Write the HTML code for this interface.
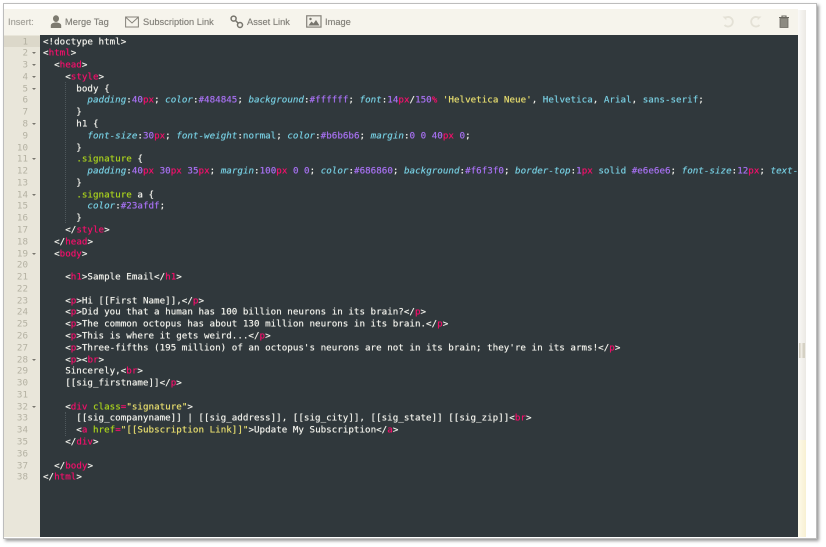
<!DOCTYPE html>
<html><head><meta charset="utf-8">
<style>
html,body{margin:0;padding:0;width:826px;height:547px;overflow:hidden;background:#fff}
#frame{position:absolute;left:3px;top:3px;width:812px;height:534px;border:1px solid #bdbdbd;border-right-width:1.5px;background:#fff;box-shadow:2px 2px 3px #999}
#tb{position:absolute;left:4px;top:9px;width:794px;height:26px;background:#f6f4ec}
.tl{position:absolute;top:16px;font:9.3px/12px "Liberation Sans",sans-serif;color:#85837c;white-space:nowrap;filter:blur(.3px);text-shadow:0 0 .4px currentColor}
svg{position:absolute;filter:blur(.25px)}
#gut{position:absolute;left:4px;top:35px;width:36px;height:502px;background:#e9e6da}
#act{position:absolute;left:4px;top:35.5px;width:36px;height:11.8px;background:#dcd8ca}
#ed{position:absolute;left:40px;top:35px;width:758px;height:502px;background:#30383c;overflow:hidden}
#sb{position:absolute;left:798px;top:10px;width:8px;height:430px;background:linear-gradient(90deg,#faf9f7,#ebe9e4)}
#sby{position:absolute;left:798px;top:440px;width:8px;height:97px;background:linear-gradient(90deg,#fdfaeb,#f8f0d2)}
#th{position:absolute;left:799px;top:343px;width:6px;height:15px;background:linear-gradient(90deg,#d5d1c4 0 1.5px,#efece4 1.5px 3.5px,#d5d1c4 3.5px)}
.n{position:absolute;left:4px;width:24px;text-align:right;font:9.2px/11.78px "DejaVu Sans Mono",monospace;color:#b4b1a2;transform:translateY(.6px);filter:blur(.3px)}
.f{position:absolute;left:31.5px;width:0;height:0;border-left:2px solid transparent;border-right:2px solid transparent;border-top:2.5px solid #77756d}
.l{position:absolute;left:3px;white-space:pre;font:9.2px/11.78px "DejaVu Sans Mono",monospace;letter-spacing:.02px;color:#f0f0ea;transform:translateY(.6px);filter:blur(.2px);text-shadow:0 0 .5px currentColor}
.g{position:absolute;left:25px;width:0;border-left:1px dotted #4f585c}
t{color:#f0106a}
i{color:#76cde0;font-style:italic}
b{font-weight:normal;color:#a570ee}
u{text-decoration:none;color:#f0106a}
s{text-decoration:none;color:#a8d01e}
q{quotes:none;color:#e6dc6e}
e{color:#78cde0}
</style></head><body>
<div id="frame"></div>
<div id="tb"></div>
<div class="tl" style="left:8px;color:#a5a39b">Insert:</div>
<svg style="left:50px;top:15px" width="12" height="14" viewBox="0 0 12 14"><ellipse cx="6" cy="3.6" rx="3" ry="3.4" fill="#7d7a70"/><path d="M0.8 13v-2.4C0.8 8.6 3 7.5 6 7.5s5.200 1.100 5.200 3.100V13z" fill="#7d7a70"/></svg>
<div class="tl" style="left:65px">Merge Tag</div>
<svg style="left:125px;top:16px" width="14" height="12" viewBox="0 0 14 12"><rect x="0.6" y="1" width="12.800" height="10" fill="none" stroke="#85827a" stroke-width="1"/><path d="M1 1.500L7 7l6-5.500" fill="none" stroke="#85827a" stroke-width="1"/></svg>
<div class="tl" style="left:143px">Subscription Link</div>
<svg style="left:230px;top:15px" width="14" height="14" viewBox="0 0 14 14"><circle cx="3.600" cy="3.600" r="2.500" fill="none" stroke="#77756d" stroke-width="1.500"/><circle cx="10" cy="10" r="2.500" fill="none" stroke="#77756d" stroke-width="1.500"/><path d="M5.500 5.500l2.800 2.800" stroke="#77756d" stroke-width="1.500"/></svg>
<div class="tl" style="left:247px">Asset Link</div>
<svg style="left:306px;top:15px" width="16" height="13" viewBox="0 0 16 13"><rect x="0.700" y="0.800" width="14.300" height="11.300" fill="#f2f0e8" stroke="#85827a" stroke-width="1.200"/><path d="M2.500 10.500l3-4 2 2 2.500-3.500 3.500 5.500z" fill="#77756d"/><circle cx="4.500" cy="4" r="1.200" fill="#77756d"/></svg>
<div class="tl" style="left:325px">Image</div>
<svg style="left:721px;top:15px" width="14" height="14" viewBox="0 0 14 14"><path d="M3.800 3.200A4.800 4.800 0 1 1 3.500 10" fill="none" stroke="#e4e1d6" stroke-width="1.800"/><path d="M1.500 1.500h3.800v3.800z" fill="#e4e1d6"/></svg>
<svg style="left:749px;top:15px" width="14" height="14" viewBox="0 0 14 14"><path d="M10.200 3.200A4.800 4.800 0 1 0 10.500 10" fill="none" stroke="#e4e1d6" stroke-width="1.800"/><path d="M12.500 1.500h-3.800v3.800z" fill="#e4e1d6"/></svg>
<svg style="left:778px;top:15px" width="12" height="13" viewBox="0 0 12 13"><path d="M1 2.500h10M4 2.500V1h4v1.500" fill="none" stroke="#69675f" stroke-width="1.100"/><path d="M2 3.500h8v9H2z" fill="#8d8b82" stroke="#69675f" stroke-width="0.800"/></svg>
<div id="gut"></div><div id="act"></div>
<div id="ed">
<div class="g" style="top:47px;height:141px"></div>
<div class="g" style="top:377px;height:24px"></div>
<div class="l" style="top:0.500px">&lt;!doctype html&gt;</div>
<div class="l" style="top:12.280px">&lt;<t>html</t>&gt;</div>
<div class="l" style="top:24.060px">  &lt;<t>head</t>&gt;</div>
<div class="l" style="top:35.840px">    &lt;<t>style</t>&gt;</div>
<div class="l" style="top:47.620px">      body {</div>
<div class="l" style="top:59.400px">        <i>padding</i>:<b>40</b><u>px</u>; <i>color</i>:<b>#484845</b>; <i>background</i>:<b>#ffffff</b>; <i>font</i>:<b>14</b><u>px</u>/<b>150</b><u>%</u> <q>'Helvetica Neue'</q>, <e>Helvetica</e>, <e>Arial</e>, <e>sans-serif</e>;</div>
<div class="l" style="top:71.180px">      }</div>
<div class="l" style="top:82.960px">      h1 {</div>
<div class="l" style="top:94.740px">        <i>font-size</i>:<b>30</b><u>px</u>; <i>font-weight</i>:<e>normal</e>; <i>color</i>:<b>#b6b6b6</b>; <i>margin</i>:<b>0 0 40</b><u>px</u> <b>0</b>;</div>
<div class="l" style="top:106.520px">      }</div>
<div class="l" style="top:118.300px">      <s>.signature</s> {</div>
<div class="l" style="top:130.080px">        <i>padding</i>:<b>40</b><u>px</u> <b>30</b><u>px</u> <b>35</b><u>px</u>; <i>margin</i>:<b>100</b><u>px</u> <b>0 0</b>; <i>color</i>:<b>#686860</b>; <i>background</i>:<b>#f6f3f0</b>; <i>border-top</i>:<b>1</b><u>px</u> <e>solid</e> <b>#e6e6e6</b>; <i>font-size</i>:<b>12</b><u>px</u>; <i>text-</i></div>
<div class="l" style="top:141.860px">      }</div>
<div class="l" style="top:153.640px">      <s>.signature</s> a {</div>
<div class="l" style="top:165.420px">        <i>color</i>:<b>#23afdf</b>;</div>
<div class="l" style="top:177.200px">      }</div>
<div class="l" style="top:188.980px">    &lt;/<t>style</t>&gt;</div>
<div class="l" style="top:200.760px">  &lt;/<t>head</t>&gt;</div>
<div class="l" style="top:212.540px">  &lt;<t>body</t>&gt;</div>
<div class="l" style="top:236.100px">    &lt;<t>h1</t>&gt;Sample Email&lt;/<t>h1</t>&gt;</div>
<div class="l" style="top:259.660px">    &lt;<t>p</t>&gt;Hi [[First Name]],&lt;/<t>p</t>&gt;</div>
<div class="l" style="top:271.440px">    &lt;<t>p</t>&gt;Did you that a human has 100 billion neurons in its brain?&lt;/<t>p</t>&gt;</div>
<div class="l" style="top:283.220px">    &lt;<t>p</t>&gt;The common octopus has about 130 million neurons in its brain.&lt;/<t>p</t>&gt;</div>
<div class="l" style="top:295px">    &lt;<t>p</t>&gt;This is where it gets weird...&lt;/<t>p</t>&gt;</div>
<div class="l" style="top:306.780px">    &lt;<t>p</t>&gt;Three-fifths (195 million) of an octopus's neurons are not in its brain; they're in its arms!&lt;/<t>p</t>&gt;</div>
<div class="l" style="top:318.560px">    &lt;<t>p</t>&gt;&lt;<t>br</t>&gt;</div>
<div class="l" style="top:330.340px">    Sincerely,&lt;<t>br</t>&gt;</div>
<div class="l" style="top:342.120px">    [[sig_firstname]]&lt;/<t>p</t>&gt;</div>
<div class="l" style="top:365.680px">    &lt;<t>div</t> <s>class</s><t>=</t><q>"signature"</q>&gt;</div>
<div class="l" style="top:377.460px">      [[sig_companyname]] | [[sig_address]], [[sig_city]], [[sig_state]] [[sig_zip]]&lt;<t>br</t>&gt;</div>
<div class="l" style="top:389.240px">      &lt;<t>a</t> <s>href</s><t>=</t><q>"[[Subscription Link]]"</q>&gt;Update My Subscription&lt;/<t>a</t>&gt;</div>
<div class="l" style="top:401.020px">    &lt;/<t>div</t>&gt;</div>
<div class="l" style="top:424.580px">  &lt;/<t>body</t>&gt;</div>
<div class="l" style="top:436.360px">&lt;/<t>html</t>&gt;</div>
</div>
<div class="n" style="top:35.500px">1</div><div class="n" style="top:47.280px">2</div><div class="n" style="top:59.060px">3</div><div class="n" style="top:70.840px">4</div><div class="n" style="top:82.620px">5</div><div class="n" style="top:94.400px">6</div><div class="n" style="top:106.180px">7</div><div class="n" style="top:117.960px">8</div><div class="n" style="top:129.740px">9</div><div class="n" style="top:141.520px">10</div><div class="n" style="top:153.300px">11</div><div class="n" style="top:165.080px">12</div><div class="n" style="top:176.860px">13</div><div class="n" style="top:188.640px">14</div><div class="n" style="top:200.420px">15</div><div class="n" style="top:212.200px">16</div><div class="n" style="top:223.980px">17</div><div class="n" style="top:235.760px">18</div><div class="n" style="top:247.540px">19</div><div class="n" style="top:259.320px">20</div><div class="n" style="top:271.100px">21</div><div class="n" style="top:282.880px">22</div><div class="n" style="top:294.660px">23</div><div class="n" style="top:306.440px">24</div><div class="n" style="top:318.220px">25</div><div class="n" style="top:330px">26</div><div class="n" style="top:341.780px">27</div><div class="n" style="top:353.560px">28</div><div class="n" style="top:365.340px">29</div><div class="n" style="top:377.120px">30</div><div class="n" style="top:388.900px">31</div><div class="n" style="top:400.680px">32</div><div class="n" style="top:412.460px">33</div><div class="n" style="top:424.240px">34</div><div class="n" style="top:436.020px">35</div><div class="n" style="top:447.800px">36</div><div class="n" style="top:459.580px">37</div><div class="n" style="top:471.360px">38</div>
<div class="f" style="top:52px"></div><div class="f" style="top:64px"></div><div class="f" style="top:76px"></div><div class="f" style="top:87.500px"></div><div class="f" style="top:123px"></div><div class="f" style="top:158px"></div><div class="f" style="top:194px"></div><div class="f" style="top:252.500px"></div><div class="f" style="top:358.500px"></div><div class="f" style="top:405.500px"></div>
<div id="sb"></div><div id="sby"></div><div id="th"></div>
</body></html>
